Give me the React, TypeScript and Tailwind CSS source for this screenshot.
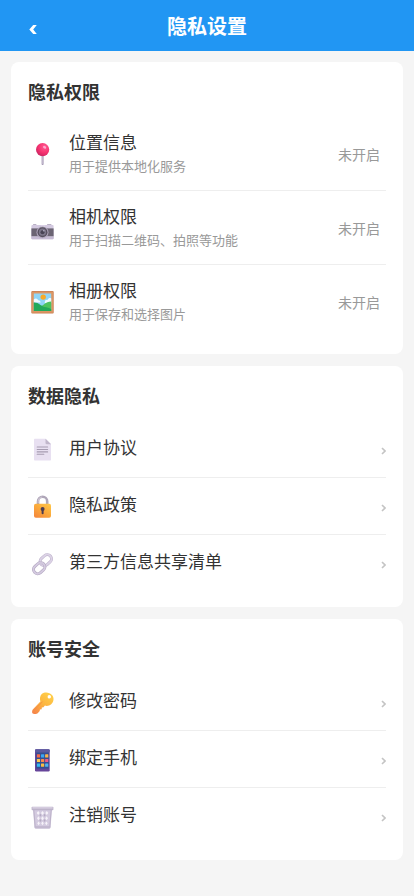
import React from 'react';

type IconName = 'pin' | 'camera' | 'picture' | 'document' | 'lock' | 'link' | 'key' | 'phone' | 'bin';
type Item = { icon: IconName; title: string; desc?: string };

const groups: { title: string; items: Item[] }[] = [
  {
    title: '隐私权限',
    items: [
      { icon: 'pin', title: '位置信息', desc: '用于提供本地化服务' },
      { icon: 'camera', title: '相机权限', desc: '用于扫描二维码、拍照等功能' },
      { icon: 'picture', title: '相册权限', desc: '用于保存和选择图片' },
    ],
  },
  {
    title: '数据隐私',
    items: [
      { icon: 'document', title: '用户协议' },
      { icon: 'lock', title: '隐私政策' },
      { icon: 'link', title: '第三方信息共享清单' },
    ],
  },
  {
    title: '账号安全',
    items: [
      { icon: 'key', title: '修改密码' },
      { icon: 'phone', title: '绑定手机' },
      { icon: 'bin', title: '注销账号' },
    ],
  },
];

const drawings: Record<IconName, React.ReactNode> = {
  pin: (
    <>
      <rect x="11.6" y="12" width="2" height="11" rx="0.8" fill="#a79bb5" />
      <rect x="12.3" y="13" width="0.6" height="9" fill="#cfc6da" />
      <circle cx="12.6" cy="7.6" r="6.6" fill="url(#pinHead)" />
      <ellipse cx="14.6" cy="5.2" rx="1.7" ry="1.3" fill="#ffa9cf" transform="rotate(35 14.6 5.2)" />
    </>
  ),
  camera: (
    <>
      <rect x="3" y="8" width="3.4" height="2" rx="0.5" fill="#b9b0c4" />
      <rect x="17" y="8" width="4.4" height="2" rx="0.5" fill="#b9b0c4" />
      <rect x="1.4" y="9" width="22.2" height="14.3" rx="1" fill="#d3c9e0" />
      <rect x="1.4" y="12.4" width="22.2" height="8" fill="#6b6473" />
      <rect x="1.4" y="20.4" width="22.2" height="2.9" rx="0.8" fill="#c6bbd4" />
      <rect x="11" y="9.7" width="4" height="1.5" fill="#e8e1f0" />
      <circle cx="12.5" cy="16.2" r="6" fill="#b1a7bd" />
      <circle cx="12.5" cy="16.2" r="5" fill="#57505f" />
      <circle cx="12.5" cy="16.2" r="3.6" fill="#7d778b" />
      <circle cx="12.5" cy="16.2" r="2" fill="#494455" />
      <circle cx="13.8" cy="14.8" r="0.8" fill="#b8b3c8" />
    </>
  ),
  picture: (
    <>
      <rect x="1.3" y="1" width="22.4" height="22.4" rx="1" fill="#c97f52" />
      <rect x="2" y="1.7" width="21" height="21" fill="#dc9663" />
      <rect x="3.8" y="3.5" width="17.4" height="17.4" fill="#8fd5f7" />
      <circle cx="13.2" cy="7.1" r="2.7" fill="#f7a928" />
      <path d="M3.8 9.5c1.7-2 4-.9 4.3.8 1.8-.1 2.5 1.2 2.5 2.2H3.8zM14.8 12c0-1.8 1.5-2.6 3-2.2.4-1.7 2.1-2.2 3.4-1.4V13h-6.4z" fill="#effaff" />
      <path d="M10 16.5c3.5-.5 5.2-4.8 11.2-4.9v9.3H10z" fill="#4cc35d" />
      <path d="M3.8 12.6c5.3-.2 7 3.6 10.4 4.3 2.6.6 5 .3 7 2.3v1.7H3.8z" fill="#22a95a" />
    </>
  ),
  document: (
    <>
      <path d="M5 1.7h10.7L21 7v15.6c0 .6-.4 1-1 1H5c-.6 0-1-.4-1-1V2.7c0-.6.4-1 1-1z" fill="#e8e0f1" />
      <path d="M15.5 1.7V6c0 .7.5 1.2 1.2 1.2H21z" fill="#c1b7cb" />
      <path d="M7.2 10h10.4M7.2 12.5h10.4M7.2 14.9h10.4M7.2 17.3h6.6" stroke="#a69cb1" strokeWidth="1.1" strokeLinecap="round" />
    </>
  ),
  lock: (
    <>
      <path d="M8 11V7.4a4.6 4.6 0 0 1 9.2 0V11" fill="none" stroke="#afa6b8" strokeWidth="2.6" />
      <path d="M8.2 9V7.4a4.4 4.4 0 0 1 4-4.4" fill="none" stroke="#d3cad9" strokeWidth="1" />
      <rect x="4" y="9.8" width="17" height="14" rx="1.8" fill="url(#lockBody)" />
      <circle cx="12.6" cy="15.1" r="2" fill="#4c3c50" />
      <rect x="11.6" y="15.5" width="2" height="4.8" rx="1" fill="#4c3c50" />
    </>
  ),
  link: (
    <g fill="none">
      <rect x="9.6" y="5" width="12.4" height="8.4" rx="4.2" transform="rotate(-42 15.8 9.2)" stroke="#c0b5cd" strokeWidth="3" />
      <rect x="9.6" y="5" width="12.4" height="8.4" rx="4.2" transform="rotate(-42 15.8 9.2)" stroke="#dcd3e6" strokeWidth="1.8" />
      <rect x="3" y="13" width="12.4" height="8.4" rx="4.2" transform="rotate(-42 9.2 17.2)" stroke="#b3a8c0" strokeWidth="3" />
      <rect x="3" y="13" width="12.4" height="8.4" rx="4.2" transform="rotate(-42 9.2 17.2)" stroke="#d4cae0" strokeWidth="1.8" />
      <path d="M11.2 10.8c-.6 1.3-.3 2.6.7 3.7" stroke="#d0c6dc" strokeWidth="2.4" />
    </g>
  ),
  key: (
    <>
      <path
        fillRule="evenodd"
        d="M12 3.8c2.8-2.3 7.7-1.5 10 1.1 2.4 2.8 1.9 7-.8 9.3-2 1.7-4.3 2-6.3 1.4l-1.4 1.6-1.7.2-.1 1.8-1.8.2-.2 1.7-2 2.2c-1 1.1-4.7 1-5.4-.2-.4-1-.2-2.7.5-3.5l7.6-8.1c-.9-2.8-.4-5.9 1.6-7.7zm7.2 1.3a1.7 1.7 0 1 0 .2 3.4 1.7 1.7 0 0 0-.2-3.4z"
        fill="url(#keyBody)"
      />
      <path d="M3.7 20.7l8.6-8.8" stroke="#f28c42" strokeWidth="0.8" strokeLinecap="round" />
    </>
  ),
  phone: (
    <>
      <rect x="5" y="2.3" width="14.7" height="22.2" rx="1.2" fill="#66459a" />
      <rect x="6.2" y="3.6" width="12.6" height="18" fill="#354e91" />
      <rect x="5" y="2.3" width="14.7" height="3.2" rx="1" fill="#5b5aa0" />
      <rect x="6.9" y="7.2" width="3.2" height="3.2" rx="0.5" fill="#f66b4c" />
      <rect x="11" y="7.2" width="3.2" height="3.2" rx="0.5" fill="#3aa8f4" />
      <rect x="15.1" y="7.2" width="3.2" height="3.2" rx="0.5" fill="#f9b44a" />
      <rect x="6.9" y="11.9" width="3.2" height="3.2" rx="0.5" fill="#ffc64d" />
      <rect x="11" y="11.9" width="3.2" height="3.2" rx="0.5" fill="#f8894d" />
      <rect x="15.1" y="11.9" width="3.2" height="3.2" rx="0.5" fill="#ed5b8a" />
      <rect x="6.9" y="16.6" width="3.2" height="3.2" rx="0.5" fill="#35b9f0" />
      <rect x="11" y="16.6" width="3.2" height="3.2" rx="0.5" fill="#f9bd45" />
      <rect x="15.1" y="16.6" width="3.2" height="3.2" rx="0.5" fill="#4eb5ef" />
    </>
  ),
  bin: (
    <>
      <path d="M3 5h19l-1.4 18c-.1.8-.7 1.4-1.5 1.4H5.9c-.8 0-1.4-.6-1.5-1.4z" fill="#d3cadf" />
      <g fill="#f6f3f9">
        <path d="M8.2 7l1.5 2-1.5 2-1.5-2zM12.5 7L14 9l-1.5 2L11 9zM16.8 7l1.5 2-1.5 2-1.5-2z" />
        <path d="M8.4 12.2l1.4 2-1.4 2-1.4-2zM12.5 12.2l1.4 2-1.4 2-1.4-2zM16.6 12.2l1.4 2-1.4 2-1.4-2z" />
        <path d="M8.6 17.4l1.3 1.9-1.3 1.9-1.3-1.9zM12.5 17.4l1.3 1.9-1.3 1.9-1.3-1.9zM16.4 17.4l1.3 1.9-1.3 1.9-1.3-1.9z" />
      </g>
      <g fill="#b5abc3">
        <path d="M10.4 9.8l1 1.5-1 1.5-1-1.5zM14.6 9.8l1 1.5-1 1.5-1-1.5zM10.4 15l1 1.5-1 1.5-1-1.5zM14.6 15l1 1.5-1 1.5-1-1.5z" />
      </g>
      <path d="M3.8 6l1.4 17h14.6l1.4-17" fill="none" stroke="#bcb2c9" strokeWidth="1" />
      <rect x="1.6" y="2.8" width="21.8" height="3.4" rx="0.8" fill="#bdb3ca" />
      <rect x="2.3" y="3.2" width="20.4" height="1.4" rx="0.6" fill="#ddd5e6" />
      <rect x="4.6" y="22.3" width="15.8" height="2.1" rx="0.9" fill="#c2b8cf" />
    </>
  ),
};

function Gradients() {
  return (
    <svg className="absolute size-0" aria-hidden="true">
      <defs>
        <radialGradient id="pinHead" cx="0.65" cy="0.3" r="0.75">
          <stop offset="0" stopColor="#ff5b92" />
          <stop offset="0.6" stopColor="#f5326f" />
          <stop offset="1" stopColor="#c92663" />
        </radialGradient>
        <linearGradient id="lockBody" x1="1" y1="0" x2="0.2" y2="1">
          <stop offset="0" stopColor="#ffc84a" />
          <stop offset="0.5" stopColor="#fbab3c" />
          <stop offset="1" stopColor="#f58a3c" />
        </linearGradient>
        <linearGradient id="keyBody" x1="0.8" y1="0" x2="0.1" y2="1">
          <stop offset="0" stopColor="#ffd04a" />
          <stop offset="0.5" stopColor="#fcb440" />
          <stop offset="1" stopColor="#f5834a" />
        </linearGradient>
      </defs>
    </svg>
  );
}

function ItemRow({ item }: { item: Item }) {
  const padding = item.desc ? 'pt-[15px] pb-[13px]' : 'py-4';
  return (
    <li className="border-b border-[#eee] last:border-0">
      <button type="button" className={`flex w-full items-center text-left ${padding}`}>
        <span className="flex h-6 w-[41px] shrink-0 items-center pl-0.5">
          <svg viewBox="0 0 25 25" className="size-[25px]" aria-hidden="true">
            {drawings[item.icon]}
          </svg>
        </span>
        <span className="flex-1">
          <span className="block text-[17px] leading-6">{item.title}</span>
          {item.desc && <span className="block text-[13px] leading-[21px] text-[#999]">{item.desc}</span>}
        </span>
        {item.desc ? (
          <span className="pr-1.5 text-sm text-[#999]">未开启</span>
        ) : (
          <svg viewBox="0 0 6 8" className="mt-1 h-2 w-1.5" fill="none" stroke="#c4c4c4" strokeWidth="1.6" aria-hidden="true">
            <path d="M2 1L5 4L2 7" />
          </svg>
        )}
      </button>
    </li>
  );
}

export default function App() {
  return (
    <div className="min-h-screen bg-[#f5f5f5] pb-6 font-['Liberation_Sans','Noto_Sans_CJK_SC',sans-serif] text-[#333]">
      <Gradients />
      <header className="flex h-[51px] items-center bg-[#2196f3] px-[17px] pt-0.5 text-white">
        <button type="button" aria-label="返回" className="flex h-8 w-8 items-center justify-center pt-1.5">
          <svg viewBox="0 0 8 9" className="h-[9px] w-2" fill="currentColor" aria-hidden="true">
            <path d="M4.2 0H7.8L4.2 4.5L7.8 9H4.2L0.3 4.5Z" />
          </svg>
        </button>
        <h1 className="flex-1 text-center text-xl font-bold">隐私设置</h1>
        <span className="w-8" />
      </header>
      <main className="flex flex-col gap-3 px-[11px] pt-[11px]">
        {groups.map((group) => (
          <section key={group.title} className="rounded-lg bg-white px-[17px] pt-[17px] pb-4">
            <h2 className="mb-2.5 text-lg leading-7 font-bold">{group.title}</h2>
            <ul>
              {group.items.map((item) => (
                <ItemRow key={item.title} item={item} />
              ))}
            </ul>
          </section>
        ))}
      </main>
    </div>
  );
}
